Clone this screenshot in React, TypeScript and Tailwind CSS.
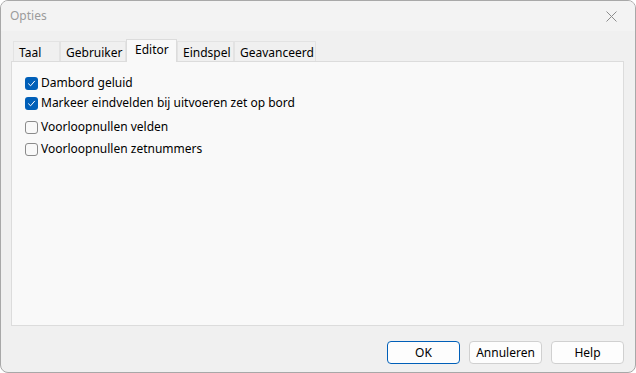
import { useState } from 'react';

const tabs = [
    { label: 'Taal', w: 'w-[47px]' },
    { label: 'Gebruiker', w: 'w-[66px]' },
    { label: 'Editor', w: 'w-[51px]' },
    { label: 'Eindspel', w: 'w-[57px]' },
    { label: 'Geavanceerd', w: 'w-[82px]' },
];

const options = [
    { label: 'Dambord geluid', checked: true, gap: 'mt-[14px]' },
    { label: 'Markeer eindvelden bij uitvoeren zet op bord', checked: true, gap: 'mt-[6px]' },
    { label: 'Voorloopnullen velden', checked: false, gap: 'mt-[10px]' },
    { label: 'Voorloopnullen zetnummers', checked: false, gap: 'mt-[8px]' },
];

function CheckBox({ checked, onToggle }: { checked: boolean; onToggle: () => void }) {
    return (
        <button
            onClick={onToggle}
            className={
                checked
                    ? 'w-[13px] h-[13px] rounded-[3px] bg-[#005fb8] flex items-center justify-center shrink-0'
                    : 'w-[13px] h-[13px] rounded-[3px] border border-[#8b8b8b] bg-[#f9f9f9] shrink-0'
            }
        >
            {checked && (
                <svg width="9" height="9" viewBox="0 0 9 9" fill="none">
                    <path d="M1.5 4.8 L3.6 6.8 L7.6 2.2" stroke="white" strokeWidth="1" strokeLinecap="round" strokeLinejoin="round" />
                </svg>
            )}
        </button>
    );
}

export default function App() {
    const [active, setActive] = useState(2);
    const [checks, setChecks] = useState(options.map(o => o.checked));

    const toggle = (i: number) => {
        const next = [...checks];
        next[i] = !next[i];
        setChecks(next);
    };

    return (
        <div className="w-[636px] h-[373px] bg-white" style={{ fontFamily: '"Noto Sans", "Segoe UI", sans-serif' }}>
            <div className="w-full h-full flex flex-col rounded-[8px] border border-[#a8a8a8] bg-[#f0f0f0] overflow-hidden text-[12px] text-black">
                {/* title bar */}
                <div className="h-[30px] shrink-0 flex items-center justify-between pl-[9px] pr-[18px] bg-[#f3f3f3]">
                    <span className="text-[#9b9b9b] text-[12px]">Opties</span>
                    <svg width="11" height="11" viewBox="0 0 11 11">
                        <path d="M0.5 0.5 L10.5 10.5 M10.5 0.5 L0.5 10.5" stroke="#8c8c8c" strokeWidth="1" />
                    </svg>
                </div>

                {/* body */}
                <div className="flex-1 flex flex-col pl-[10px] pr-[11px] pt-[8px] pb-[8px]">
                    <div className="flex items-end h-[22px] pl-[2px]">
                        {tabs.map((t, i) =>
                            i === active ? (
                                <button
                                    key={t.label}
                                    onClick={() => setActive(i)}
                                    className={`${t.w} h-[23px] -mb-px relative z-10 bg-[#f9f9f9] border border-b-0 border-[#dcdcdc] pl-[8px] pb-[3px] text-left leading-none flex items-center`}
                                >
                                    {t.label}
                                </button>
                            ) : (
                                <button
                                    key={t.label}
                                    onClick={() => setActive(i)}
                                    className={`${t.w} h-[20px] bg-[#f0f0f0] border border-[#e3e3e3] border-b-0 pl-[5px] text-left leading-none flex items-center pt-[3px]`}
                                >
                                    {t.label}
                                </button>
                            )
                        )}
                    </div>

                    <div className="h-[265px] bg-[#f9f9f9] border border-[#dcdcdc] flex flex-col pl-[13px]">
                        {options.map((o, i) => (
                            <label key={o.label} className={`${o.gap} flex items-center gap-[3px] h-[14px]`}>
                                <CheckBox checked={checks[i]} onToggle={() => toggle(i)} />
                                <span className="whitespace-nowrap">{o.label}</span>
                            </label>
                        ))}
                    </div>

                    <div className="flex justify-end gap-[9px] mt-[15px]">
                        <button className="w-[73px] h-[23px] rounded-[4px] border border-[#005fb8] bg-[#fdfdfd]">OK</button>
                        <button className="w-[73px] h-[23px] rounded-[4px] border border-[#d0d0d0] bg-[#fdfdfd]">Annuleren</button>
                        <button className="w-[73px] h-[23px] rounded-[4px] border border-[#d0d0d0] bg-[#fdfdfd]">Help</button>
                    </div>
                </div>
            </div>
        </div>
    );
}
